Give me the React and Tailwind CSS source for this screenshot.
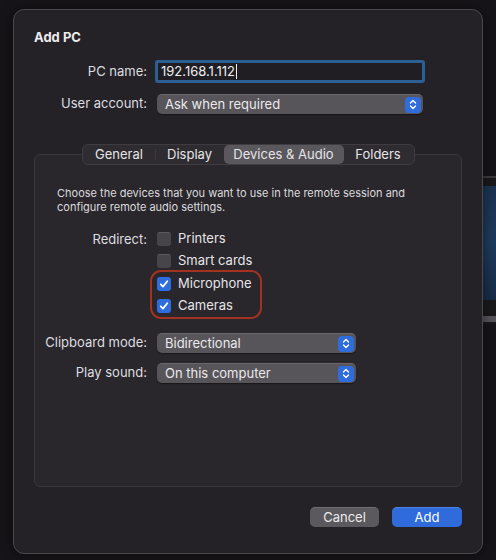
import React from 'react';

const Stepper = () => (
  <span className="flex h-4 w-4 items-center justify-center rounded-[4px] bg-[#2f6ddc]">
    <svg width="8" height="11" viewBox="0 0 8 11" fill="none" stroke="white" strokeWidth="1.4" strokeLinecap="round" strokeLinejoin="round">
      <path d="M1.5 4 L4 1.5 L6.5 4" />
      <path d="M1.5 7 L4 9.5 L6.5 7" />
    </svg>
  </span>
);

const Select = ({ value, width }) => (
  <div
    className={`flex h-5 items-center justify-between rounded-[5px] border-t border-[#6a686c] bg-[#575559] pl-2 pr-[2px] text-[13px] text-[#ebe9ed] shadow-[0_1px_1px_rgba(0,0,0,0.4)] ${width}`}
  >
    <span className="leading-none">{value}</span>
    <Stepper />
  </div>
);

const Checkbox = ({ checked, label }) => (
  <div className="flex h-[22px] items-center gap-[7px]">
    {checked ? (
      <span className="flex h-[14px] w-[14px] items-center justify-center rounded-[3px] bg-[#2f6ddc]">
        <svg width="10" height="10" viewBox="0 0 10 10" fill="none" stroke="white" strokeWidth="1.8" strokeLinecap="round" strokeLinejoin="round">
          <path d="M1.8 5.3 L4 7.6 L8.3 2.2" />
        </svg>
      </span>
    ) : (
      <span className="h-[14px] w-[14px] rounded-[3px] border-t border-[#5c5a5e] bg-[#474549]" />
    )}
    <span className="text-[13px] text-[#e6e4e8]">{label}</span>
  </div>
);

const tabs = [
  { name: 'General', w: 'w-[71px]' },
  { name: 'Display', w: 'w-[68px]' },
  { name: 'Devices & Audio', w: 'w-[120px]', active: true },
  { name: 'Folders', w: 'w-[69px]' },
];

export default function App() {
  return (
    <div
      className="relative h-[560px] w-[496px] overflow-hidden bg-[#161418] pl-[13px] pt-[9px]"
      style={{ fontFamily: 'Inter, "Noto Sans", sans-serif' }}
    >
      {/* window behind the dialog */}
      <div className="absolute left-[450px] top-[176px] flex h-[148px] w-[60px] flex-col border-t-2 border-[#3b393d] bg-[#19181b]">
        <div className="mt-[8px] h-[114px] bg-gradient-to-b from-[#1b3350] via-[#1e3a5c] to-[#172c45]" />
        <div className="mt-[16px] h-[6px] bg-[#56545a]" />
      </div>

      <div className="relative z-10 flex h-[545px] w-[470px] flex-col rounded-[11px] border border-[#4a484c] bg-[#242226] px-[20px] pt-[19px] shadow-[0_0_12px_rgba(0,0,0,0.5)]">
        <div className="h-4 text-[13px] font-bold leading-4 text-[#ecebee]">Add PC</div>

        <div className="mt-[15px] flex h-[23px] items-center">
          <div className="w-[113px] text-right text-[13px] text-[#dedde0]">PC name:</div>
          <div className="ml-[8px] flex h-[23px] w-[270px] items-center rounded-[3px] border-[3px] border-[#2c5f94] bg-[#201e22] pl-[3px] text-[13px] text-[#f0eff2]">
            192.168.1.112
            <span className="ml-[1px] h-[15px] w-px bg-[#f0eff2]" />
          </div>
        </div>

        <div className="mt-[11px] flex h-5 items-center">
          <div className="w-[113px] text-right text-[13px] text-[#dedde0]">User account:</div>
          <div className="ml-[10px]">
            <Select value="Ask when required" width="w-[266px]" />
          </div>
        </div>

        <div className="relative z-10 mt-[30px] flex justify-center">
          <div className="flex h-[21px] items-center rounded-[6px] border border-[#3e3c40] bg-[#2e2c30] px-[1px]">
            {tabs.map((t, i) => (
              <div key={t.name} className="flex h-[19px] items-center">
                {i === 1 && <span className="h-[11px] w-px bg-[#3c3a3e]" />}
                <div
                  className={`flex h-[19px] items-center justify-center rounded-[5px] text-[13px] text-[#e6e4e8] ${t.w} ${
                    t.active ? 'bg-[#5a585c]' : ''
                  }`}
                >
                  {t.name}
                </div>
              </div>
            ))}
          </div>
        </div>

        <div className="-mt-[11px] flex h-[333px] flex-col rounded-[6px] border border-[#39373b] bg-[#29272b] pt-[31px]">
          <p className="pl-[22px] text-[11px] leading-[14px] text-[#dcdbde]">
            Choose the devices that you want to use in the remote session and
            <br />
            configure remote audio settings.
          </p>

          <div className="mt-[14px] flex">
            <div className="h-[22px] w-[112px] text-right text-[13px] leading-[22px] text-[#dedde0]">Redirect:</div>
            <div className="ml-[10px] flex flex-col">
              <Checkbox label="Printers" />
              <Checkbox label="Smart cards" />
              <div className="relative mt-px flex flex-col">
                <span className="pointer-events-none absolute -left-[7px] -top-[3px] h-[49px] w-[112px] rounded-[11px] border-2 border-[#a33220]" />
                <Checkbox checked label="Microphone" />
                <Checkbox checked label="Cameras" />
              </div>
            </div>
          </div>

          <div className="mt-[16px] flex h-5 items-center">
            <div className="w-[112px] text-right text-[13px] text-[#dedde0]">Clipboard mode:</div>
            <div className="ml-[10px]">
              <Select value="Bidirectional" width="w-[199px]" />
            </div>
          </div>

          <div className="mt-[10px] flex h-5 items-center">
            <div className="w-[112px] text-right text-[13px] text-[#dedde0]">Play sound:</div>
            <div className="ml-[10px]">
              <Select value="On this computer" width="w-[199px]" />
            </div>
          </div>
        </div>

        <div className="mt-[20px] flex justify-end gap-[13px]">
          <button className="flex h-5 w-[69px] items-center justify-center rounded-[5px] border-t border-[#6e6c70] bg-[#5b595d] text-[13px] text-[#ecebee]">
            Cancel
          </button>
          <button className="flex h-5 w-[70px] items-center justify-center rounded-[5px] border-t border-[#4a86ea] bg-[#2f6bdb] text-[13px] text-white">
            Add
          </button>
        </div>
      </div>
    </div>
  );
}
